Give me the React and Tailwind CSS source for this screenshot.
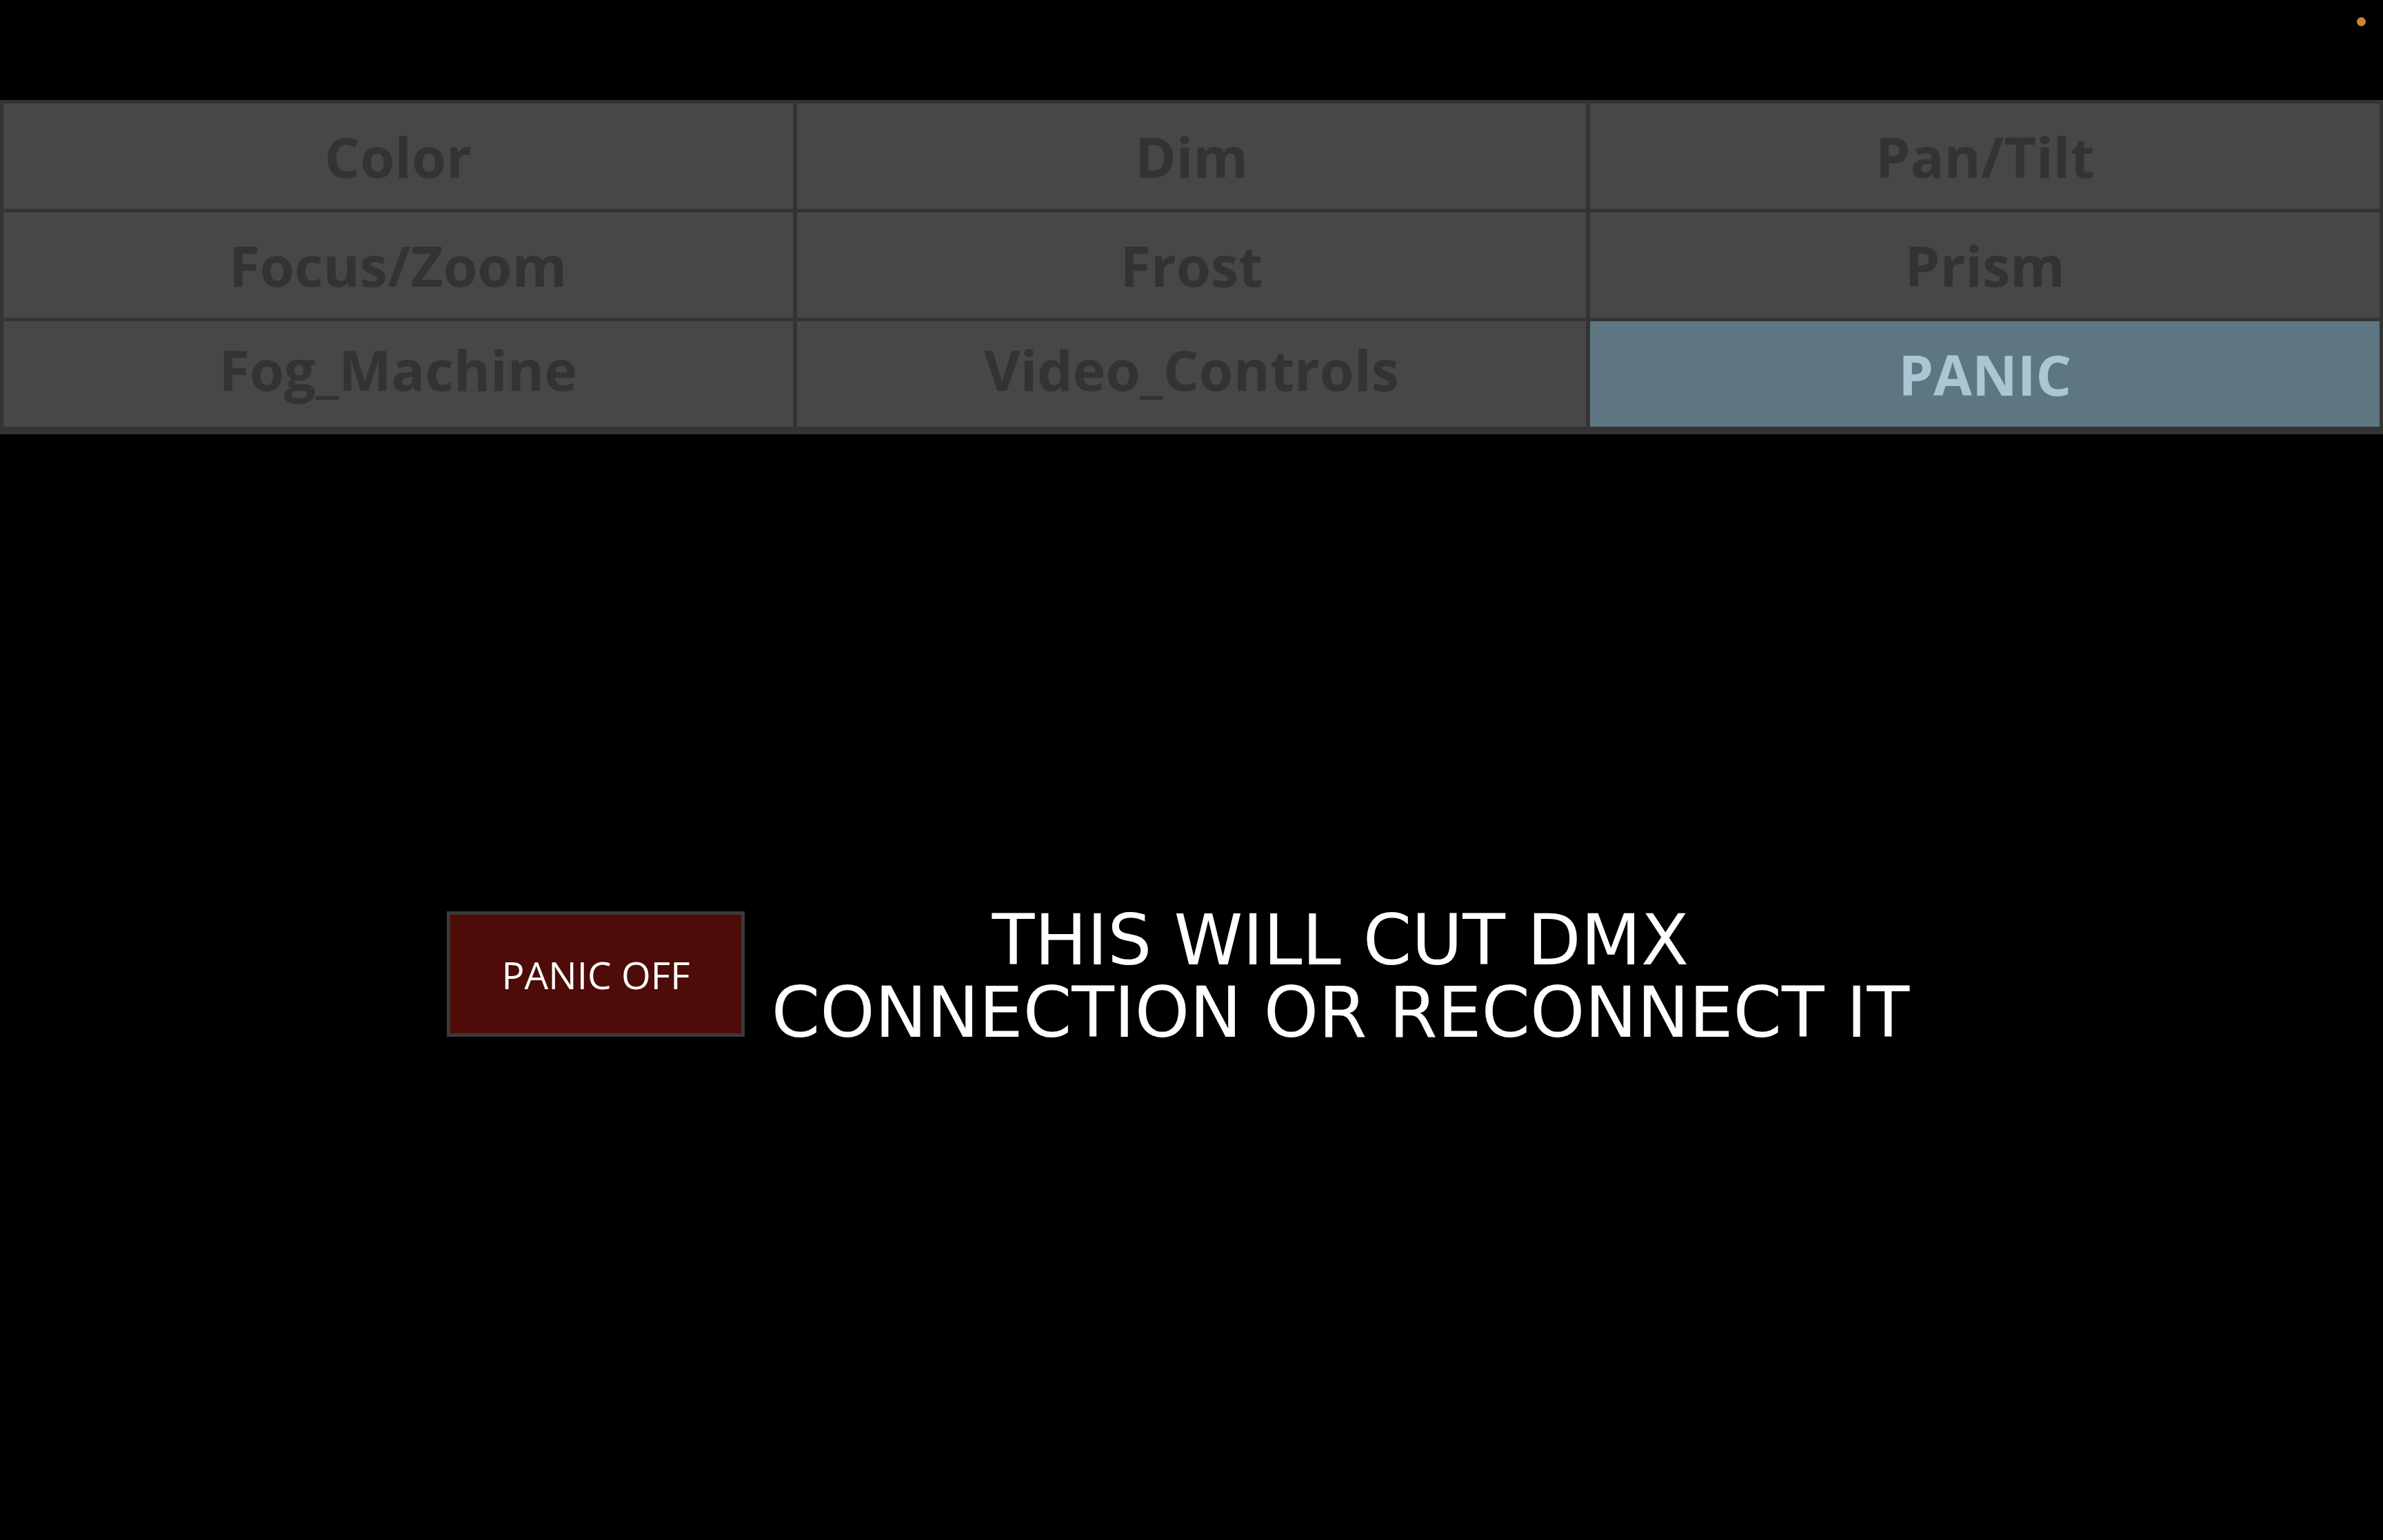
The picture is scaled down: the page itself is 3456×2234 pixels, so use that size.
import React from "react";

const tabs = [
  { label: "Color" },
  { label: "Dim" },
  { label: "Pan/Tilt" },
  { label: "Focus/Zoom" },
  { label: "Frost" },
  { label: "Prism" },
  { label: "Fog_Machine", lift: true },
  { label: "Video_Controls", lift: true },
  { label: "PANIC", active: true },
];

const App = () => {
  return (
    <div className="relative w-[3456px] h-[2234px] bg-black overflow-hidden">
      {/* status dot */}
      <div className="absolute top-[25px] left-[3418px] w-[13px] h-[13px] rounded-full bg-[#c98534]" />

      <div className="h-[145px]" />

      {/* Tab grid */}
      <div className="grid grid-cols-3 gap-x-[6px] gap-y-[5px] bg-[#343434] pt-[5px] px-[5px] pb-[11px]">
        {tabs.map((t) => (
          <div
            key={t.label}
            className={
              t.active
                ? "h-[153px] flex items-center justify-center bg-[#5e7682]"
                : "h-[153px] flex items-center justify-center bg-[#474747]"
            }
          >
            <span
              className={
                (t.active ? "text-[#a9c6d2] " : "text-[#333333] ") +
                (t.lift ? "-translate-y-[7px] " : "") +
                "font-['Open_Sans',sans-serif] font-bold text-[81px] leading-none"
              }
            >
              {t.label}
            </span>
          </div>
        ))}
      </div>

      {/* Panic row */}
      <div className="mt-[674px] flex items-center justify-center">
        <button className="w-[432px] h-[182px] bg-[#4e0b08] border-[5px] border-[#3a3a3a] flex items-center justify-center font-['Open_Sans',sans-serif] text-[55px] text-white leading-none">
          PANIC OFF
        </button>
        <div className="w-[1728px] pt-[8px] text-center font-['DejaVu_Sans',sans-serif] text-[101px] leading-[105px] text-white">
          THIS WILL CUT DMX
          <br />
          CONNECTION OR RECONNECT IT
        </div>
      </div>
    </div>
  );
};

export default App;
